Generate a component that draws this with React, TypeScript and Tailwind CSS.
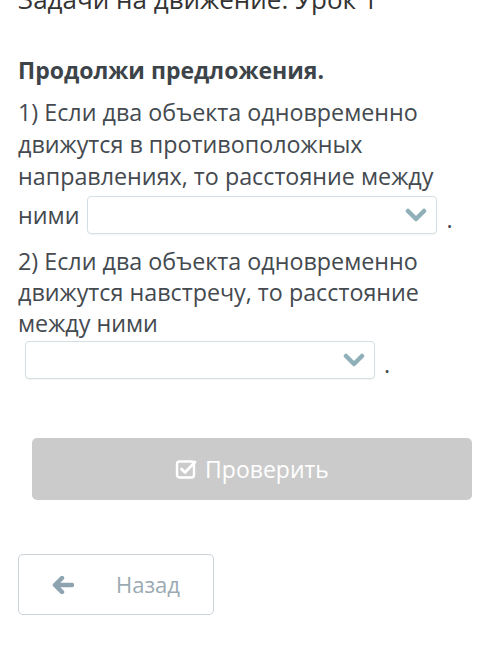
import React from "react";

const Chevron = () => (
  <svg width="22" height="14" viewBox="0 0 22 14" className="shrink-0">
    <path d="M3 3 L11 11 L19 3" fill="none" stroke="#8fb0b8" strokeWidth="4.5" strokeLinecap="round" strokeLinejoin="round" />
  </svg>
);

const CheckSquare = () => (
  <svg width="22" height="22" viewBox="0 0 22 22" className="shrink-0">
    <rect x="2" y="3.5" width="17" height="16" rx="2.5" fill="none" stroke="#fff" strokeWidth="2.4" />
    <path d="M6.5 11 L10 14.5 L20 4" fill="none" stroke="#fff" strokeWidth="2.8" strokeLinecap="round" strokeLinejoin="round" />
  </svg>
);

const ArrowLeft = () => (
  <svg width="22" height="18" viewBox="0 0 22 18">
    <path d="M10 2 L3 9 L10 16 M4 9 H20" fill="none" stroke="#8da4b0" strokeWidth="4.5" strokeLinecap="round" strokeLinejoin="round" />
  </svg>
);

const Select = () => (
  <div className="w-[350px] h-[38px] border border-[#d3dfe2] rounded-[4px] bg-white flex items-center justify-end pr-[9px] shadow-[0_1px_1px_rgba(0,0,0,0.04)]">
    <Chevron />
  </div>
);

export default function App() {
  return (
    <div className="w-[500px] h-[648px] bg-white overflow-hidden text-[#444a4f]" style={{ fontFamily: '"Open Sans", "Noto Sans", sans-serif' }}>
      <div className="px-[18px] mt-[-17px] text-[26px] leading-[32px] text-[#333]">Задачи на движение. Урок 1</div>

      <div className="px-[18px] mt-[40px] text-[23px] leading-[30px] font-bold text-[#3d4449]">Продолжи предложения.</div>

      <div className="px-[18px] mt-[11px] text-[23.3px] leading-[32px]">
        <div>1) Если два объекта одновременно движутся в противоположных направлениях, то расстояние между</div>
        <div className="flex items-center mt-[4px]">
          <span>ними</span>
          <div className="ml-[8px]">
            <Select />
          </div>
          <span className="ml-[9px] mt-[10px] leading-none">.</span>
        </div>
      </div>

      <div className="px-[18px] mt-[12px] text-[23.3px] leading-[31px]">
        <div>2) Если два объекта одновременно движутся навстречу, то расстояние между ними</div>
        <div className="flex items-center mt-[2px] pl-[7px]">
          <Select />
          <span className="ml-[9px] mt-[10px] leading-none">.</span>
        </div>
      </div>

      <div className="pl-[32px] pr-[28px] mt-[59px]">
        <div className="h-[62px] rounded-[5px] bg-[#cbcbcb] flex items-center justify-center gap-[8px] text-white text-[23px]">
          <CheckSquare />
          <span>Проверить</span>
        </div>
      </div>

      <div className="px-[18px] mt-[54px]">
        <div className="w-[196px] h-[61px] rounded-[5px] border border-[#c9d3d8] flex items-center pl-[33px] text-[22px] text-[#9aaab3]">
          <ArrowLeft />
          <span className="ml-[42px]">Назад</span>
        </div>
      </div>
    </div>
  );
}
